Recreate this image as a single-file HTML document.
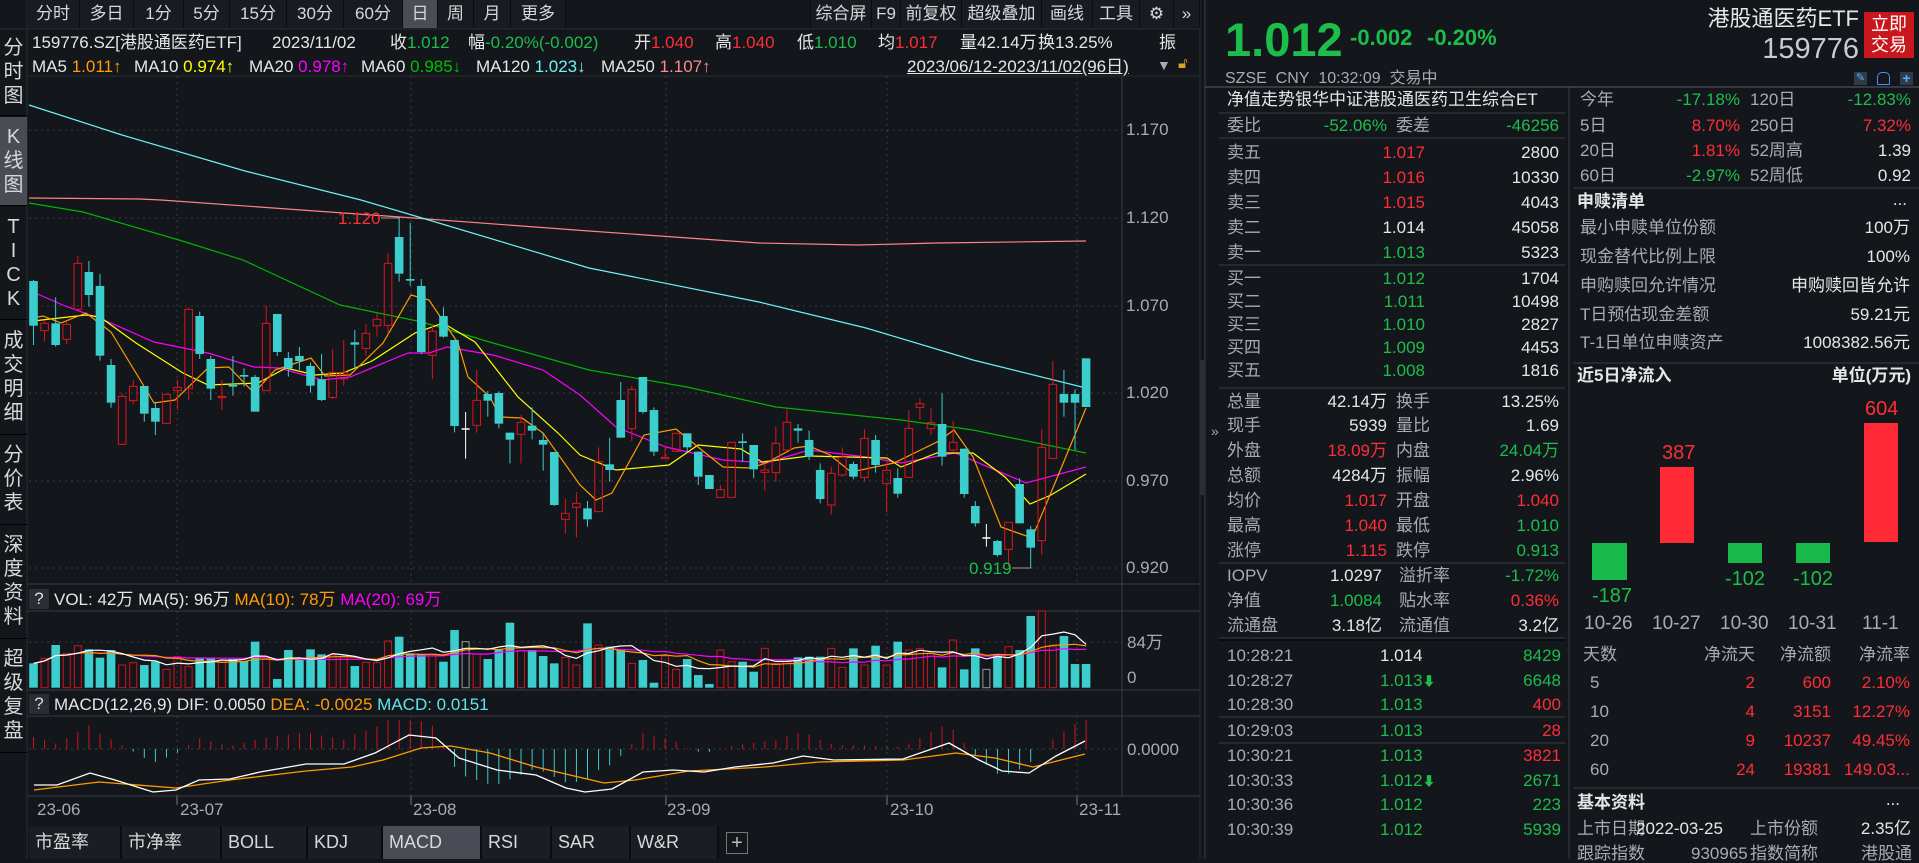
<!DOCTYPE html>
<html><head><meta charset="utf-8">
<style>
*{margin:0;padding:0;box-sizing:border-box}
body{width:1919px;height:859px;background:#13161b;overflow:hidden;position:relative;font-family:"Liberation Sans","Noto Sans CJK SC",sans-serif;color:#d0d0d0;font-size:17px}
.a{position:absolute;white-space:nowrap;line-height:1}
.r{color:#ff2d36}.g{color:#1dbd4c}.w{color:#e6e6e6}.gr{color:#a9abb0}
.tb{position:absolute;top:0;height:28px;line-height:28px;text-align:center;font-size:17px;color:#d8d8d8;border-right:1px solid #0b0c0f;background:#181b21}
.vt{position:absolute;left:0;width:27px;text-align:center;font-size:20px;line-height:24px;color:#d8d8d8;border-bottom:1px solid #000}
.bt{position:absolute;top:826px;height:33px;line-height:33px;font-size:18px;color:#d8d8d8;padding-left:6px;background:#1a1d23;border-right:2px solid #0b0c0f}
.rt{text-align:right}
</style></head><body>
<svg id="sv" width="1919" height="859" style="position:absolute;left:0;top:0"></svg>

<div class="tb" style="left:27px;width:53px">分时</div>
<div class="tb" style="left:80px;width:54px">多日</div>
<div class="tb" style="left:134px;width:50px">1分</div>
<div class="tb" style="left:184px;width:46px">5分</div>
<div class="tb" style="left:230px;width:57px">15分</div>
<div class="tb" style="left:287px;width:57px">30分</div>
<div class="tb" style="left:344px;width:59px">60分</div>
<div class="tb" style="left:403px;width:35px;background:#4a4d56">日</div>
<div class="tb" style="left:438px;width:36px">周</div>
<div class="tb" style="left:474px;width:37px">月</div>
<div class="tb" style="left:511px;width:55px">更多</div>
<div class="tb" style="left:566px;width:244px;border:none;background:#13161b"></div>
<div class="tb" style="left:810px;width:62px;border-left:1px solid #0b0c0f">综合屏</div>
<div class="tb" style="left:872px;width:29px">F9</div>
<div class="tb" style="left:901px;width:61px">前复权</div>
<div class="tb" style="left:962px;width:80px">超级叠加</div>
<div class="tb" style="left:1042px;width:51px">画线</div>
<div class="tb" style="left:1093px;width:47px">工具</div>
<div class="tb" style="left:1140px;width:34px">⚙</div>
<div class="tb" style="left:1174px;width:26px">»</div>

<div class="vt" style="top:30px;height:86px;padding-top:6px">分<br>时<br>图</div>
<div class="vt" style="top:117px;height:89px;padding-top:8px;background:#4a4c55">K<br>线<br>图</div>
<div class="vt" style="top:207px;height:113px;padding-top:8px">T<br>I<br>C<br>K</div>
<div class="vt" style="top:321px;height:114px;padding-top:8px">成<br>交<br>明<br>细</div>
<div class="vt" style="top:435px;height:90px;padding-top:8px">分<br>价<br>表</div>
<div class="vt" style="top:525px;height:114px;padding-top:8px">深<br>度<br>资<br>料</div>
<div class="vt" style="top:639px;height:114px;padding-top:8px">超<br>级<br>复<br>盘</div>

<div class="a w" style="left:32px;top:34px">159776.SZ[港股通医药ETF]</div>
<div class="a w" style="left:272px;top:34px">2023/11/02</div>
<div class="a w" style="left:390px;top:34px">收<span class="g">1.012</span></div>
<div class="a w" style="left:468px;top:34px">幅<span class="g">-0.20%(-0.002)</span></div>
<div class="a w" style="left:634px;top:34px">开<span class="r">1.040</span></div>
<div class="a w" style="left:715px;top:34px">高<span class="r">1.040</span></div>
<div class="a w" style="left:797px;top:34px">低<span class="g">1.010</span></div>
<div class="a w" style="left:878px;top:34px">均<span class="r">1.017</span></div>
<div class="a w" style="left:960px;top:34px">量42.14万</div>
<div class="a w" style="left:1038px;top:34px">换13.25%</div>
<div class="a w" style="left:1159px;top:34px">振</div>
<div class="a w" style="left:32px;top:58px">MA5 <span style="color:#ff9c00">1.011↑</span></div>
<div class="a w" style="left:134px;top:58px">MA10 <span style="color:#ffff00">0.974↑</span></div>
<div class="a w" style="left:249px;top:58px">MA20 <span style="color:#ff00ff">0.978↑</span></div>
<div class="a w" style="left:361px;top:58px">MA60 <span style="color:#00c000">0.985↓</span></div>
<div class="a w" style="left:476px;top:58px">MA120 <span style="color:#6ef2f7">1.023↓</span></div>
<div class="a w" style="left:601px;top:58px">MA250 <span style="color:#ff8888">1.107↑</span></div>
<div class="a w" style="left:907px;top:58px;text-decoration:underline">2023/06/12-2023/11/02(96日)</div>
<div class="a gr" style="left:1157px;top:58px;font-size:14px">▼</div>
<div class="a" style="left:1178px;top:56px;font-size:15px;color:#e0a020">🔓︎</div>

<div class="a gr" style="left:1126px;top:121px">1.170</div>
<div class="a gr" style="left:1126px;top:209px">1.120</div>
<div class="a gr" style="left:1126px;top:297px">1.070</div>
<div class="a gr" style="left:1126px;top:384px">1.020</div>
<div class="a gr" style="left:1126px;top:472px">0.970</div>
<div class="a gr" style="left:1126px;top:559px">0.920</div>
<div class="a r" style="left:338px;top:210px">1.120</div>
<div class="a g" style="left:969px;top:560px">0.919</div>

<div class="a" style="left:29px;top:589px;width:20px;height:20px;background:#2a2d34;text-align:center;line-height:20px;color:#ddd">?</div>
<div class="a w" style="left:54px;top:591px">VOL: 42万 MA(5): 96万 <span style="color:#ff9c00">MA(10): 78万</span> <span style="color:#ff00ff">MA(20): 69万</span></div>
<div class="a gr" style="left:1127px;top:634px">84万</div>
<div class="a gr" style="left:1127px;top:669px">0</div>
<div class="a" style="left:29px;top:694px;width:20px;height:20px;background:#2a2d34;text-align:center;line-height:20px;color:#ddd">?</div>
<div class="a w" style="left:54px;top:696px">MACD(12,26,9) DIF: 0.0050 <span style="color:#ff9c00">DEA: -0.0025</span> <span style="color:#5fe6ee">MACD: 0.0151</span></div>
<div class="a gr" style="left:1127px;top:741px">0.0000</div>

<div class="a gr" style="left:37px;top:801px">23-06</div>
<div class="a gr" style="left:180px;top:801px">23-07</div>
<div class="a gr" style="left:413px;top:801px">23-08</div>
<div class="a gr" style="left:667px;top:801px">23-09</div>
<div class="a gr" style="left:890px;top:801px">23-10</div>
<div class="a gr" style="left:1079px;top:801px">23-11</div>

<div class="bt" style="left:29px;width:93px">市盈率</div>
<div class="bt" style="left:122px;width:100px">市净率</div>
<div class="bt" style="left:222px;width:86px">BOLL</div>
<div class="bt" style="left:308px;width:75px">KDJ</div>
<div class="bt" style="left:383px;width:99px;background:#4a4c55">MACD</div>
<div class="bt" style="left:482px;width:70px">RSI</div>
<div class="bt" style="left:552px;width:79px">SAR</div>
<div class="bt" style="left:631px;width:88px">W&amp;R</div>
<div class="a" style="left:726px;top:832px;width:22px;height:22px;border:1px solid #777;text-align:center;line-height:20px;color:#bbb;font-size:20px">+</div>

<div class="a" style="left:1211px;top:424px;color:#aaa;font-size:14px">»</div>
<div class="a g" style="left:1225px;top:16px;font-size:47px;font-weight:bold">1.012</div>
<div class="a g" style="left:1350px;top:27px;font-size:22px;font-weight:bold">-0.002</div>
<div class="a g" style="left:1427px;top:27px;font-size:22px;font-weight:bold">-0.20%</div>
<div class="a w rt" style="right:60px;top:8px;font-size:22px">港股通医药ETF</div>
<div class="a" style="right:60px;top:35px;font-size:29px;color:#c9cbd0">159776</div>
<div class="a" style="left:1864px;top:12px;width:50px;height:46px;background:#c8171d;color:#fff;font-size:18px;line-height:21px;text-align:center;padding-top:2px">立即<br>交易</div>
<div class="a gr" style="left:1225px;top:71px;font-size:16px">SZSE&nbsp; CNY&nbsp; 10:32:09&nbsp; 交易中</div>
<div class="a" style="left:1854px;top:72px;width:13px;height:13px;background:#2f3a4a;color:#4fb0ff;font-size:11px;text-align:center;line-height:13px">✎</div>
<div class="a" style="left:1877px;top:72px;width:13px;height:13px;border:1px solid #4f8fff;border-radius:5px 5px 1px 1px"></div>
<div class="a" style="left:1900px;top:72px;width:13px;height:13px;background:#2f3a4a;color:#4fb0ff;font-size:14px;font-weight:bold;text-align:center;line-height:13px">+</div>

<div id="rp"></div>
<script>
const S=document.getElementById('sv');let h='';
function L(x1,y1,x2,y2,c,w,d){h+=`<line x1="${x1}" y1="${y1}" x2="${x2}" y2="${y2}" stroke="${c}" stroke-width="${w||1}"${d?` stroke-dasharray="${d}"`:''}/>`}
function R(x,y,w,hh,f,s){h+=`<rect x="${x}" y="${y}" width="${w}" height="${hh}" fill="${f}"${s?` stroke="${s}"`:''}/>`}
function P(pts,c,w){h+=`<polyline points="${pts.map(p=>p.join(',')).join(' ')}" fill="none" stroke="${c}" stroke-width="${w||1.2}"/>`}
L(27,0,27,859,'#2a2d33');L(0,29,1200,29,'#2a2d33');
L(1122,76,1122,796,'#3a3d44');L(1205,0,1205,859,'#3a3d44');L(1200,0,1200,859,'#2a2d33');
R(1200,360,5,135,'#2b2e35');
[584,611,690,716,796].forEach(y=>L(27,y,1200,y,'#3a3d44'));
L(27,76,1200,76,'#2a2d33');
[130,218,306,393,481,568].forEach(y=>L(29,y,1122,y,'#3a3d44',1,'2 4'));
L(29,642,1122,642,'#3a3d44',1,'2 4');L(29,749,1122,749,'#3a3d44',1,'2 4');
[177,411,666,887,1077].forEach(x=>{L(x,76,x,584,'#3a3d44',1,'2 4');L(x,611,x,690,'#3a3d44',1,'2 4');L(x,716,x,796,'#3a3d44',1,'2 4');L(x,796,x,805,'#777')});
P([[29,198],[140,199],[161,200],[400,217],[589,231],[759,243],[858,245],[937,243],[1086,241]],'#ff8585');
P([[29,105],[122,135],[245,171],[361,200],[422,218],[589,268],[759,302],[866,328],[973,360],[1086,388]],'#6ef2f7');
P([[29,203],[83,212],[179,240],[243,260],[340,305],[422,322],[493,343],[589,370],[687,387],[776,407],[901,420],[973,430],[1086,453]],'#00b400');
P([[33,292],[65,306],[104,320],[154,342],[208,353],[254,367],[279,368],[322,380],[350,377],[386,362],[408,353],[429,353],[447,347],[475,352],[493,355],[543,370],[580,395],[616,427],[666,447],[723,460],[766,463],[809,450],[866,457],[901,463],[955,453],[1026,483],[1086,467]],'#ff00ff');
P([[33,321],[86,315],[100,317],[136,343],[183,373],[208,385],[258,383],[286,368],[315,375],[343,373],[372,361],[415,333],[443,323],[475,342],[518,397],[558,433],[580,455],[616,470],[669,465],[698,445],[741,449],[762,462],[809,456],[887,458],[901,467],[937,453],[973,453],[1005,477],[1030,504],[1051,495],[1086,474]],'#ffff00');
P([[33,318],[43,316],[61,323],[86,313],[111,332],[136,373],[154,403],[175,400],[208,368],[229,367],[254,393],[275,370],[311,358],[325,376],[350,375],[383,343],[411,295],[429,300],[458,343],[468,377],[490,397],[500,417],[522,418],[543,433],[580,485],[596,500],[612,493],[644,435],[676,429],[698,447],[723,467],[751,468],[766,463],[794,448],[809,446],[830,455],[851,472],[894,463],[937,442],[954,430],[973,457],[1001,527],[1032,538],[1055,483],[1086,408]],'#ff9c00');
const C=[['c',243,377,240,435],['r',370,392,360,425],['c',370,435,292,440],['r',373,418,365,432],['r',190,328,168,328],['c',216,285,183,320],['c',258,467,222,482],['c',495,608,477,623],['r',589,733,580,733],['r',559,602,540,613],
['c',558,641,558,665],['c',624,665,605,705],['r',583,670,580,670],['r',562,572,538,630],['r',328,565,322,600],['c',348,462,335,477],['c',477,566,468,600],['r',589,593,540,630],['c',555,560,468,587],['c',525,530,505,560],
['c',531,635,525,635],['r',370,572,316,572],['c',342,456,342,468],['c',474,505,456,530],['c',468,483,441,510],['c',498,557,488,578],['c',538,600,462,603],['r',517,592,447,597],['r',517,537,420,557],['c',427,434,390,505],
['r',400,445,372,468],['r',358,377,340,410],['r',190,376,160,403],['c',111,221,55,245],['c',237,242,68,258],['c',258,456,237,462],['r',394,466,375,537],['c',348,410,322,413],['c',420,678,420,697],['w',687,689,636,776],
['r',601,676,510,698],['c',582,602,573,650],['c',579,671,574,685],['c',698,719,698,790],['r',667,703,645,790],['c',677,692,622,718],['c',720,734,700,812],['c',756,915,756,918],['r',940,958,897,1000],['r',910,922,877,1012],
['c',925,958,903,980],['r',785,935,742,935],['c',793,810,713,845],['c',600,713,546,713],['r',568,686,558,723],['c',531,636,531,641],['c',630,755,622,768],['r',772,776,737,776],['r',700,754,700,754],['c',700,742,700,755],
['c',755,830,755,855],['c',825,867,825,867],['r',869,892,855,892],['r',727,892,727,892],['c',724,729,700,785],['c',735,808,735,835],['r',810,817,790,872],['r',730,818,680,845],['r',667,750,625,750],['c',685,692,672,728],
['c',720,770,692,780],['c',810,897,790,910],['r',820,915,800,943],['r',772,825,742,830],['c',792,830,785,838],['r',715,832,688,845],['c',720,795,705,818],['r',811,851,775,937],['c',834,881,805,893],['r',685,832,630,832],
['r',611,622,595,660],['r',668,686,625,705],['c',672,770,580,797],['r',727,750,662,755],['c',746,882,746,893],['c',918,970,903,980],['w',1014,1016,972,1040],['c',1023,1065,1020,1070],['r',967,1048,967,1100],['c',852,970,835,970],
['c',988,1043,978,1105],['r',742,1022,688,1065],['r',553,775,483,775],['c',582,608,510,650],['c',582,608,568,750],['c',475,621,475,621]];
const RC='#e0141c',CC='#3ccdcd';
const X=i=>33.5+i*11.08, Y=z=>200+z/3;
C.forEach((c,i)=>{const x=X(i),t=Y(c[1]),b=Y(c[2]),hi=Y(c[3]),lo=Y(c[4]);
 if(c[0]=='r'){L(x,hi,x,t,RC);L(x,b,x,lo,RC);R(x-3.8,t,7.6,Math.max(b-t,1),'none',RC);}
 else if(c[0]=='c'){L(x,hi,x,lo,CC);R(x-4.3,t,8.6,Math.max(b-t,1.5),CC);}
 else{L(x,hi,x,lo,'#fff');L(x-4,t,x+4,t,'#fff',1.5);}
});
L(381,218,400,218,'#999');L(1012,568,1031,568,'#999');
const V=[250,235,195,220,197,208,233,210,255,248,255,245,268,230,260,235,235,240,237,243,185,237,297,210,237,208,223,225,230,258,247,248,183,170,223,222,222,245,150,185,222,237,210,128,212,210,228,250,232,255,130,195,200,210,250,240,308,228,268,237,285,312,210,245,245,275,205,250,245,232,230,230,205,262,205,255,197,255,185,210,205,220,262,180,268,205,268,225,200,210,108,93,200,168,252,252];
const base=687.7;const vh=V.map(z=>(323-z)/3);
C.forEach((c,i)=>{const x=X(i),v=vh[i]||10;
 if(c[0]=='c')R(x-4.3,base-v,8.6,v,CC);else R(x-3.5,base-v,7,v,'none',c[0]=='w'?'#999':'#d0141c');});
function ma(n){return vh.map((v,i)=>{let s=0,k=0;for(let j=Math.max(0,i-n+1);j<=i;j++){s+=vh[j];k++}return [X(i).toFixed(1),(base-s/k).toFixed(1)]})}
P(ma(20),'#ff00ff',1.2);P(ma(10),'#ff9c00',1.2);P(ma(5),'#ffffff',1.2);
const DIF=[[34,785],[57,785],[90,773],[115,780],[153,792],[176,790],[199,780],[230,779],[260,772],[306,764],[344,764],[375,753],[409,735],[436,738],[459,758],[497,770],[536,775],[566,788],[585,792],[612,789],[643,772],[673,770],[704,772],[735,767],[773,763],[803,756],[834,760],[903,759],[949,743],[979,760],[1002,771],[1029,773],[1056,756],[1085,741]];
const DEA=[[34,790],[99,782],[176,788],[230,780],[306,771],[352,767],[383,760],[421,748],[451,746],[490,753],[536,767],[604,783],[635,780],[689,771],[765,767],[819,762],[903,760],[956,753],[995,758],[1033,767],[1085,754]];
function it(a,x){for(let k=0;k<a.length-1;k++){if(x>=a[k][0]&&x<=a[k+1][0]){const f=(x-a[k][0])/(a[k+1][0]-a[k][0]);return a[k][1]+f*(a[k+1][1]-a[k][1])}}return x<a[0][0]?a[0][1]:a[a.length-1][1]}
C.forEach((c,i)=>{const x=X(i);const d=(it(DEA,x)-it(DIF,x))*2.4;const y2=Math.max(720,Math.min(795,749-d));L(x,749,x,y2,d>0?'#d0141c':'#3ccdcd');});
P(DEA,'#ff9c00',1.3);P(DIF,'#ffffff',1.3);
L(1569,87,1569,859,'#3a3d44');L(1205,87,1919,87,'#44474e',1.5);
[113,138,265,388,563,638,717,743].forEach(y=>L(1219,y,1565,y,'#3a3d44'));
L(1219,640,1565,640,'#000');
[188,363,788].forEach(y=>L(1573,y,1919,y,'#3a3d44'));
R(1592,543,35,37,'#17b94a');R(1660,467,34,76,'#ff2a35');R(1728,543,34,20,'#17b94a');R(1796,543,34,20,'#17b94a');R(1864,423,34,119,'#ff2a35');
S.innerHTML=h;
let t='';
function T(x,y,s,cls,right,extra){t+=`<div class="a ${cls||''}" style="${right?'right:'+(1919-x)+'px':'left:'+x+'px'};top:${y-9}px;${extra||''}">${s}</div>`}
T(1227,100,'净值走势银华中证港股通医药卫生综合ET','w');
T(1227,126,'委比','gr');T(1387,126,'-52.06%','g',1);T(1396,126,'委差','gr');T(1559,126,'-46256','g',1);
const ob=[['卖五','1.017','r','2800'],['卖四','1.016','r','10330'],['卖三','1.015','r','4043'],['卖二','1.014','w','45058'],['卖一','1.013','g','5323'],['买一','1.012','g','1704'],['买二','1.011','g','10498'],['买三','1.010','g','2827'],['买四','1.009','g','4453'],['买五','1.008','g','1816']];
const oy=[153,178,203,228,253,279,302,325,348,371];
ob.forEach((o,i)=>{T(1227,oy[i],o[0],'gr');T(1425,oy[i],o[1],o[2],1);T(1559,oy[i],o[3],'w',1)});
const st=[['总量','42.14万','w','换手','13.25%','w'],['现手','5939','w','量比','1.69','w'],['外盘','18.09万','r','内盘','24.04万','g'],['总额','4284万','w','振幅','2.96%','w'],['均价','1.017','r','开盘','1.040','r'],['最高','1.040','r','最低','1.010','g'],['涨停','1.115','r','跌停','0.913','g'],['IOPV','1.0297','w','溢折率','-1.72%','g'],['净值','1.0084','g','贴水率','0.36%','r'],['流通盘','3.18亿','w','流通值','3.2亿','w']];
const sy=[402,426,451,476,501,526,551,576,601,626];
st.forEach((s,i)=>{T(1227,sy[i],s[0],'gr');T(i>6?1382:1387,sy[i],s[1],s[2],1);T(i>6?1399:1396,sy[i],s[3],'gr');T(1559,sy[i],s[4],s[5],1)});
const tk=[['10:28:21','1.014','w','','8429','g'],['10:28:27','1.013','g','↓','6648','g'],['10:28:30','1.013','g','','400','r'],['10:29:03','1.013','g','','28','r'],['10:30:21','1.013','g','','3821','r'],['10:30:33','1.012','g','↓','2671','g'],['10:30:36','1.012','g','','223','g'],['10:30:39','1.012','g','','5939','g']];
const ty=[656,681,705,731,756,781,805,830];
tk.forEach((k,i)=>{T(1227,ty[i],k[0],'gr');T(1380,ty[i],k[1]+(k[3]?'<span style="font-size:13px;font-weight:bold">⬇</span>':''),k[2]);T(1561,ty[i],k[4],k[5],1)});
[['今年','-17.18%','g','120日','-12.83%','g'],['5日','8.70%','r','250日','7.32%','r'],['20日','1.81%','r','52周高','1.39','w'],['60日','-2.97%','g','52周低','0.92','w']].forEach((s,i)=>{const y=[100,126,151,176][i];T(1580,y,s[0],'gr');T(1740,y,s[1],s[2],1);T(1750,y,s[3],'gr');T(1911,y,s[4],s[5],1)});
T(1577,202,'申赎清单','w','','font-weight:bold');T(1907,200,'...','w',1);
[['最小申赎单位份额','100万'],['现金替代比例上限','100%'],['申购赎回允许情况','申购赎回皆允许'],['T日预估现金差额','59.21元'],['T-1日单位申赎资产','1008382.56元']].forEach((s,i)=>{const y=[228,257,286,315,343][i];T(1580,y,s[0],'gr');T(1910,y,s[1],'w',1)});
T(1577,376,'近5日净流入','w','','font-weight:bold');T(1911,376,'单位(万元)','w',1,'font-weight:bold');
T(1592,595,'-187','g','','font-size:20px');T(1662,452,'387','r','','font-size:20px');T(1725,578,'-102','g','','font-size:20px');T(1793,578,'-102','g','','font-size:20px');T(1865,408,'604','r','','font-size:20px');
[['10-26',1584],['10-27',1652],['10-30',1720],['10-31',1788],['11-1',1862]].forEach(d=>T(d[1],623,d[0],'gr','','font-size:19px'));
T(1583,655,'天数','gr');T(1755,655,'净流天','gr',1);T(1831,655,'净流额','gr',1);T(1910,655,'净流率','gr',1);
[['5','2','600','2.10%'],['10','4','3151','12.27%'],['20','9','10237','49.45%'],['60','24','19381','149.03...']].forEach((r,i)=>{const y=[683,712,741,770][i];T(1590,y,r[0],'gr');T(1755,y,r[1],'r',1);T(1831,y,r[2],'r',1);T(1910,y,r[3],'r',1)});
T(1577,803,'基本资料','w','','font-weight:bold');T(1900,800,'...','w',1);
T(1577,829,'上市日期','gr');T(1636,829,'2022-03-25','w');T(1750,829,'上市份额','gr');T(1911,829,'2.35亿','w',1);
T(1577,854,'跟踪指数','gr');T(1691,854,'930965','gr');T(1750,854,'指数简称','gr');T(1861,854,'港股通','gr');
document.getElementById('rp').innerHTML=t;
</script>
</body></html>
